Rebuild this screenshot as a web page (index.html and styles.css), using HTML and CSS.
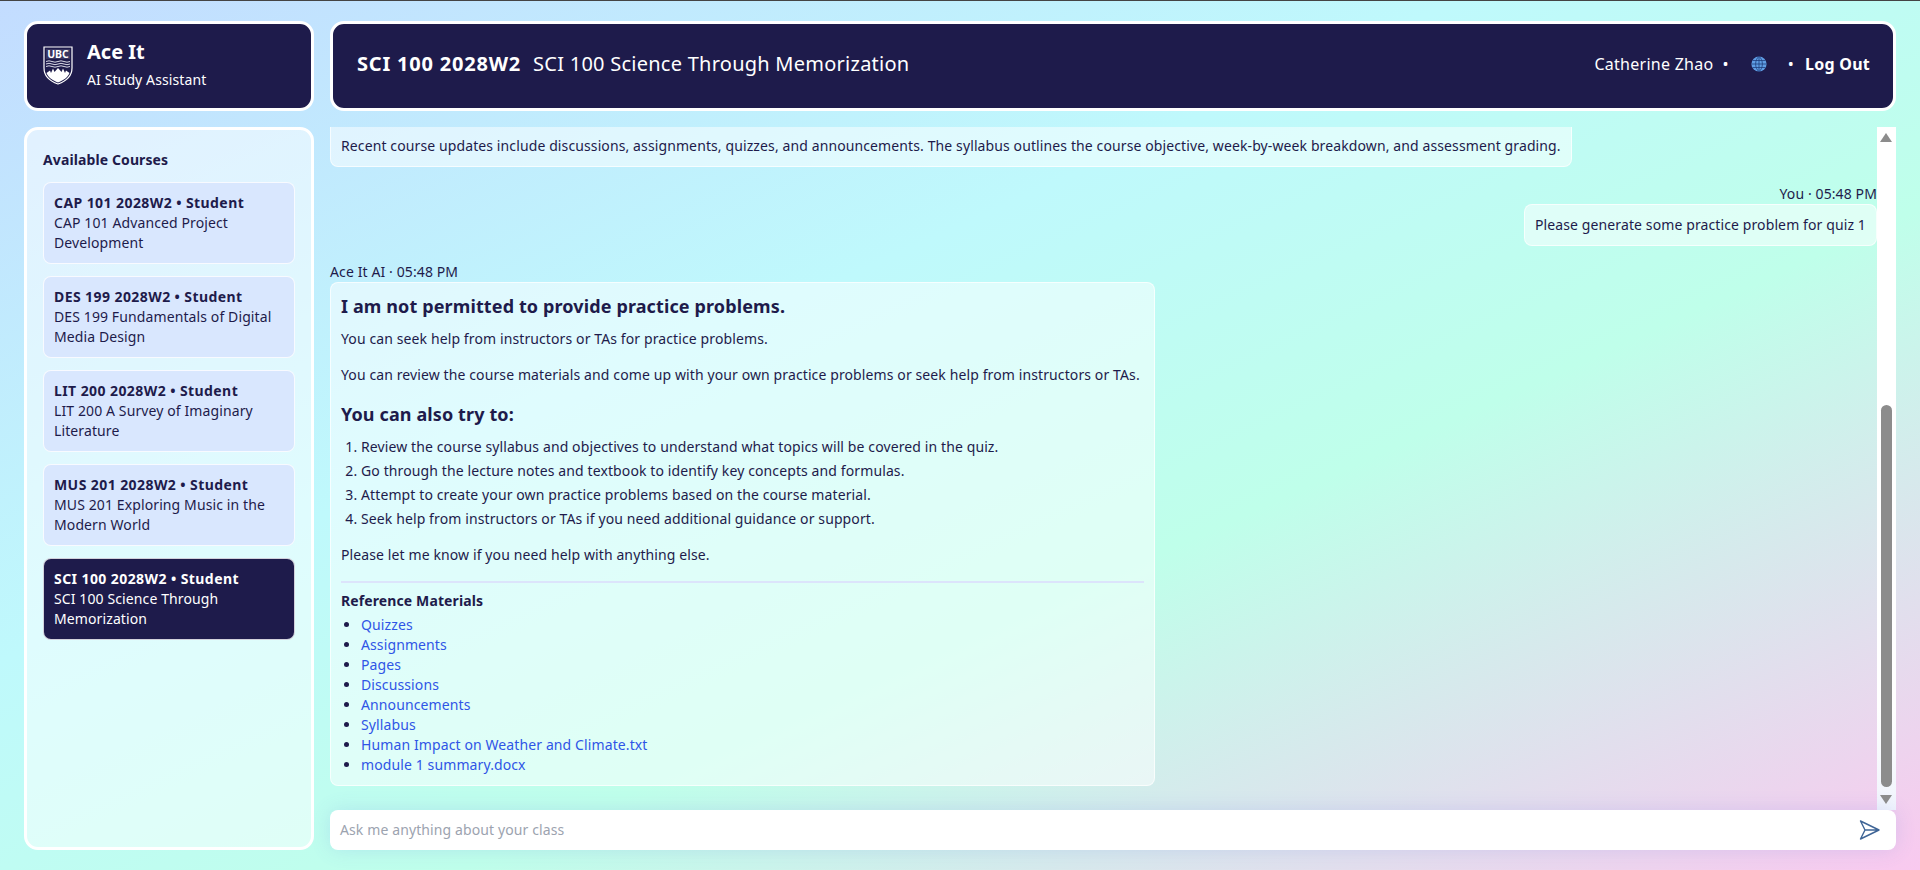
FILE: index.html
```html
<!DOCTYPE html>
<html lang="en">
<head>
<meta charset="utf-8">
<title>Ace It</title>
<link rel="stylesheet" href="styles.css">
</head>
<body>
<div class="topline"></div>
<div class="app">
  <header class="brand">
    <svg class="logo" width="30" height="39" viewBox="0 0 30 39" aria-hidden="true">
      <path d="M1 1H29V22C29 31 22 35.500 15 38C8 35.500 1 31 1 22Z" fill="none" stroke="#fff" stroke-width="1.200"/>
      <path d="M3 3H27V13H3Z" fill="#fff" fill-opacity=".12"/>
      <text x="15" y="11.500" class="logo-text">UBC</text>
      <path d="M3 15.500q3-1.400 6 0t6 0 6 0 6 0M3 18q3-1.400 6 0t6 0 6 0 6 0M3 20.500q3-1.400 6 0t6 0 6 0 6 0" fill="none" stroke="#d9d9e6" stroke-width="1"/>
      <path d="M3.500 27L7 24.500L8 27L10 22.500L11.500 26L15 22L18.500 26L20 22.500L22 27L23 24.500L26.500 27C25 31.500 20 34.500 15 36.500C10 34.500 5 31.500 3.500 27Z" fill="#fff"/>
    </svg>
    <div class="brand-copy">
      <div class="brand-name">Ace It</div>
      <div class="brand-sub">AI Study Assistant</div>
    </div>
  </header>
  <header class="topbar">
    <div class="course-title"><strong>SCI 100 2028W2</strong><span>SCI 100 Science Through Memorization</span></div>
    <div class="user-nav">
      <span class="user-name">Catherine Zhao</span>
      <span class="dot dot-a">•</span>
      <svg class="globe" width="16" height="16" viewBox="0 0 16 16" aria-hidden="true">
        <circle cx="8" cy="8" r="7.600" fill="#5f9de4"/>
        <path d="M1.500 4.500H14.500M.5 8H15.500M1.500 11.500H14.500M8 .3V15.700M8 .3C3.500 4 3.500 12 8 15.700M8 .3C12.500 4 12.500 12 8 15.700" fill="none" stroke="#1f3f7c" stroke-width=".8"/>
      </svg>
      <span class="dot dot-b">•</span>
      <strong class="logout">Log Out</strong>
    </div>
  </header>
  <aside class="sidebar">
    <h2 class="side-title">Available Courses</h2>
    <div class="course"><b>CAP 101 2028W2 • Student</b><span>CAP 101 Advanced Project Development</span></div>
    <div class="course"><b>DES 199 2028W2 • Student</b><span>DES 199 Fundamentals of Digital Media Design</span></div>
    <div class="course"><b>LIT 200 2028W2 • Student</b><span>LIT 200 A Survey of Imaginary Literature</span></div>
    <div class="course"><b>MUS 201 2028W2 • Student</b><span>MUS 201 Exploring Music in the Modern World</span></div>
    <div class="course course-active"><b>SCI 100 2028W2 • Student</b><span>SCI 100 Science Through Memorization</span></div>
  </aside>
  <main class="chat">
    <div class="chat-scroll">
      <div class="messages">
        <div class="bubble bubble-clipped">Recent course updates include discussions, assignments, quizzes, and announcements. The syllabus outlines the course objective, week-by-week breakdown, and assessment grading.</div>
        <div class="meta meta-user">You · 05:48 PM</div>
        <div class="bubble bubble-user">Please generate some practice problem for quiz 1</div>
        <div class="meta meta-ai">Ace It AI · 05:48 PM</div>
        <div class="bubble bubble-ai">
          <h3 class="h-first">I am not permitted to provide practice problems.</h3>
          <p>You can seek help from instructors or TAs for practice problems.</p>
          <p>You can review the course materials and come up with your own practice problems or seek help from instructors or TAs.</p>
          <h3 class="h-second">You can also try to:</h3>
          <ol>
            <li>Review the course syllabus and objectives to understand what topics will be covered in the quiz.</li>
            <li>Go through the lecture notes and textbook to identify key concepts and formulas.</li>
            <li>Attempt to create your own practice problems based on the course material.</li>
            <li>Seek help from instructors or TAs if you need additional guidance or support.</li>
          </ol>
          <p class="closing">Please let me know if you need help with anything else.</p>
          <div class="refs">
            <div class="refs-title">Reference Materials</div>
            <ul>
              <li><a href="#">Quizzes</a></li>
              <li><a href="#">Assignments</a></li>
              <li><a href="#">Pages</a></li>
              <li><a href="#">Discussions</a></li>
              <li><a href="#">Announcements</a></li>
              <li><a href="#">Syllabus</a></li>
              <li><a href="#">Human Impact on Weather and Climate.txt</a></li>
              <li><a href="#">module 1 summary.docx</a></li>
            </ul>
          </div>
        </div>
      </div>
      <div class="scrollbar">
        <div class="arrow arrow-up"></div>
        <div class="track"><div class="thumb"></div></div>
        <div class="arrow arrow-down"></div>
      </div>
    </div>
    <div class="composer">
      <span class="placeholder">Ask me anything about your class</span>
      <svg class="send" width="22" height="22" viewBox="0 0 22 22" aria-hidden="true">
        <path d="M1.500 2L20 11L1.500 20L6 11ZM6 11H20" fill="none" stroke="#3f6596" stroke-width="1.400" stroke-linejoin="round"/>
      </svg>
    </div>
  </main>
</div>
</body>
</html>
```
FILE: styles.css
```css
* { box-sizing: border-box; }
html, body { height: 100%; }
body {
  margin: 0;
  overflow: hidden;
  font-family: "Noto Sans", "Open Sans", sans-serif;
  font-size: 14px;
  letter-spacing: .11px;
  line-height: 20px;
  color: #1e1b4b;
  background: linear-gradient(to bottom right, #c3dcff 0%, #bff9fc 38%, #bfffea 62%, #f9c9ef 100%);
}
.topline { height: 1px; background: #444; }
.app {
  display: grid;
  grid-template-columns: 290px 1566px;
  grid-template-rows: 90px 723px;
  gap: 16px;
  padding: 20px 24px;
}
.brand, .topbar {
  display: flex;
  align-items: center;
  background: #1e1b4b;
  border: 3px solid #fff;
  border-radius: 14px;
  color: #fff;
}
.brand { padding: 0 0 4px 16px; gap: 14px; }
.logo { margin-top: 3px; }
.logo-text { font-size: 10.500px; font-weight: 700; fill: #fff; text-anchor: middle; letter-spacing: 0; }
.brand-name { font-size: 20px; font-weight: 700; line-height: 28px; letter-spacing: 0; }
.brand-sub { line-height: 20px; margin-top: 4px; }
.topbar { justify-content: space-between; padding: 0 23px 4px 24px; }
.course-title { font-size: 20px; line-height: 28px; letter-spacing: .25px; }
.course-title strong { letter-spacing: .8px; }
.course-title span { margin-left: 12px; }
.user-nav { display: flex; align-items: center; font-size: 16px; letter-spacing: .26px; }
.dot-a { margin: 0 16px 0 9px; }
.dot-b { margin: 0 11px 0 21px; }
.globe { display: block; margin-left: 6px; }
.sidebar {
  background: rgba(255, 255, 255, .5);
  border: 3px solid #fff;
  border-radius: 14px;
  padding: 20px 16px;
}
.side-title { margin: 0 0 12px; font-size: 14px; line-height: 20px; font-weight: 700; }
.course {
  height: 82px;
  margin-bottom: 12px;
  padding: 10px;
  background: #d9e7fe;
  border: 1px solid rgba(255, 255, 255, .8);
  border-radius: 8px;
}
.course b, .course span { display: block; }
.course b { letter-spacing: .42px; }
.course-active { background: #1e1b4b; color: #fff; }
.chat { display: flex; flex-direction: column; min-width: 0; }
.chat-scroll { display: flex; height: 683px; }
.messages { flex: 1; min-width: 0; display: flex; flex-direction: column; align-items: flex-start; }
.bubble {
  background: rgba(255, 255, 255, .5);
  border: 1px solid rgba(255, 255, 255, .7);
  border-radius: 8px;
  padding: 10px;
}
.bubble-clipped { border-top: 0; border-radius: 0 0 8px 8px; height: 40px; padding-top: 9px; }
.meta { line-height: 20px; }
.meta-user { margin-top: 17px; align-self: flex-end; }
.bubble-user { align-self: flex-end; }
.meta-ai { margin-top: 16px; }
.bubble-ai { width: 825px; height: 504px; padding-top: 11px; }
h3 { margin: 0; font-size: 18px; line-height: 24px; font-weight: 700; letter-spacing: .12px; }
p { margin: 0; }
.h-first { margin-bottom: 11px; }
.bubble-ai > p + p { margin-top: 16px; }
.h-second { margin-top: 17px; }
ol { margin: 11px 0 0; padding-left: 20px; }
ol li { margin-bottom: 4px; }
.bubble-ai > p.closing { margin-top: 16px; }
.refs { margin-top: 16px; padding-top: 8px; border-top: 2px solid #dce4fb; }
.refs-title { font-weight: 700; margin-bottom: 4px; }
ul { margin: 0; padding-left: 20px; }
a { color: #2f55e6; text-decoration: none; }
.scrollbar { width: 19px; display: flex; flex-direction: column; background: linear-gradient(#fff 85%, #f0f4fc); }
.track { flex: 1; padding: 257px 4px 0; }
.thumb { height: 382px; background: #8c8c8c; border-radius: 6px; }
.arrow { height: 21px; position: relative; }
.arrow::after {
  content: "";
  position: absolute;
  left: 3px;
  border-left: 6.5px solid transparent;
  border-right: 6.5px solid transparent;
}
.arrow-up::after { top: 6px; border-bottom: 9px solid #8c8c8c; }
.arrow-down::after { top: 6px; border-top: 9px solid #8c8c8c; }
.composer {
  height: 40px;
  display: flex;
  align-items: center;
  justify-content: space-between;
  padding: 0 6px 0 10px;
  background: #fff;
  border-radius: 8px;
  box-shadow: 0 0 20px rgba(90, 110, 230, .16);
}
.placeholder { color: #9ca3af; }
.send { display: block; margin-right: 9px; }
```
